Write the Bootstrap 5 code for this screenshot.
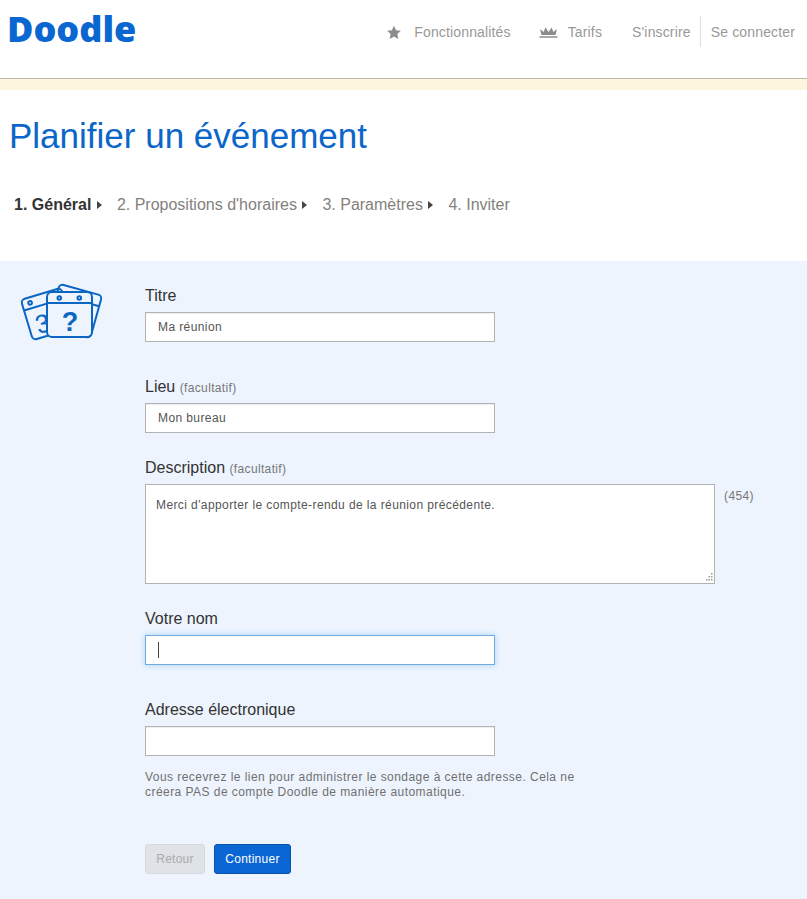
<!DOCTYPE html>
<html lang="fr">
<head>
  <meta charset="UTF-8">
  <title>Doodle - Planifier un événement</title>
  <meta name="viewport" content="width=device-width, initial-scale=1">
  <link rel="stylesheet" href="https://cdn.jsdelivr.net/npm/bootstrap@5.3.0/dist/css/bootstrap.min.css">
  <style>
    html, body { font-family: "Liberation Sans", Arial, sans-serif; background: #fff; color: #333; }
    /* header */
    .top-bar { height: 79px; border-bottom: 1px solid #b9b9a9; padding: 15px 12px 0 7px; }
    .logo { font-family: "Open Sans", sans-serif; font-weight: 800; font-size: 36px; line-height: 28px; color: #0a66d0; text-decoration: none; }
    .top-nav { margin-top: 1px; }
    .top-link { color: #999; font-size: 14px; line-height: 33px; letter-spacing: .15px; text-decoration: none; }
    .top-link svg { fill: #8c8c8c; display: block; }
    .link-gap { margin-right: 30px; }
    .link-gap-short { margin-right: 28px; }
    .crown-icon { margin-right: 2px; }
    .divider { border-left: 1px solid #ddd; height: 31px; margin: 0 10px 0 9px; }
    .notice-strip { height: 11px; background: #fdf5de; }
    /* title + steps */
    .page-title { font-size: 35px; line-height: 40px; color: #0a66c8; font-weight: 400; margin: 26px 0 0 9px; }
    .steps { margin: 39px 0 0 14px; height: 66px; font-size: 16px; line-height: 20px; color: #84817c; }
    .steps b { color: #333; }
    .step-arrow { width: 0; height: 0; border-left: 5px solid #444; border-top: 4.500px solid transparent; border-bottom: 4.500px solid transparent; margin: 6px 15px 0 5.500px; }
    /* form panel */
    .panel-area { background: #edf4fe; padding: 24px 0 25px 20px; }
    .icon-col { width: 125px; flex: none; margin-top: -2px; }
    .field-label { font-size: 16px; line-height: 22px; color: #333; margin: 0 0 5px; display: block; }
    .field-label small { font-size: 12px; line-height: 1; letter-spacing: .35px; color: #777; }
    .field-input.form-control { width: 350px; height: 30px; border: 1px solid #b2b2b2; border-radius: 0; padding: 0 12px; font-size: 12px; letter-spacing: .4px; color: #555; background: #fff; box-shadow: inset 0 1px 1px #eee; }
    .field-input.is-active { border-color: #72acdf; box-shadow: 0 0 6px #a5cff3; }
    .caret-mark { position: absolute; left: 13px; top: 7px; width: 1px; height: 16px; background: #444; }
    .text-box.form-control { width: 570px; height: 100px; border: 1px solid #b2b2b2; border-radius: 0; padding: 12px 10px; font-size: 12px; letter-spacing: .4px; line-height: 16px; color: #555; resize: none; }
    .grip { position: absolute; right: 2px; bottom: 2px; fill: #999; }
    .counter { font-size: 12px; letter-spacing: .4px; color: #777; margin: 3px 0 0 9px; }
    .gap-wide { margin-bottom: 34px; }
    .gap-narrow { margin-bottom: 24px; }
    .help-text { font-size: 12px; letter-spacing: .45px; line-height: 15px; color: #707070; margin: 14px 0 44px; width: 450px; }
    .btn-back.btn, .btn-next.btn { height: 30px; padding: 0; font-size: 12px; letter-spacing: .25px; border-radius: 3px; line-height: 28px; }
    .btn-back.btn { width: 60px; background: #dfe2e6; border: 1px solid #d6d9dd; color: #aaa; opacity: 1; }
    .btn-next.btn { width: 77px; background: #0a66d4; border: 1px solid #0a50a8; color: #fff; margin-left: 9px; }
  </style>
</head>
<body>
  <header class="top-bar d-flex justify-content-between align-items-start">
    <a class="logo" href="#">Doodle</a>
    <nav class="top-nav d-flex align-items-start">
      <a class="top-link d-flex align-items-center gap-2 link-gap-short" href="#">
        <svg width="16" height="15" viewBox="0 0 24 24"><path d="M12 1l3.400 7.200 7.600 1-5.600 5.300 1.500 7.800L12 18.400l-6.900 3.900 1.500-7.800L1 9.200l7.600-1z"/></svg>
        <span class="ms-1">Fonctionnalités</span>
      </a>
      <a class="top-link d-flex align-items-center gap-2 link-gap" href="#">
        <svg class="crown-icon" width="19" height="11" viewBox="0 0 19 11"><path d="M1 2l3.500 3L6.500 .5 9.500 5l3-4.500 2 4.500L18 2l-1.500 6h-14zM.5 9.300h18v1.400H.5z"/></svg>
        <span>Tarifs</span>
      </a>
      <a class="top-link" href="#">S'inscrire</a>
      <span class="divider"></span>
      <a class="top-link" href="#">Se connecter</a>
    </nav>
  </header>
  <div class="notice-strip"></div>

  <h1 class="page-title">Planifier un événement</h1>
  <div class="steps d-flex align-items-start">
    <b>1. Général</b><span class="step-arrow"></span>
    <span>2. Propositions d'horaires</span><span class="step-arrow"></span>
    <span>3. Paramètres</span><span class="step-arrow"></span>
    <span>4. Inviter</span>
  </div>

  <main class="panel-area d-flex">
    <div class="icon-col">
      <svg width="84" height="60" viewBox="0 0 84 60" fill="none" stroke="#0a66c2" stroke-width="2">
        <g transform="rotate(-16.700 27 31)">
          <rect x="6" y="10" width="42" height="42" rx="4"/>
          <path d="M6 21h42"/>
          <circle cx="14" cy="15.500" r="1.800"/>
          <text x="13" y="48" font-family="Liberation Sans" font-size="26" fill="#0a66c2" stroke="none">3</text>
        </g>
        <g transform="rotate(15.600 55 28)">
          <rect x="33" y="6" width="44" height="44" rx="4"/>
          <path d="M33 17h44"/>
        </g>
        <rect x="27" y="9" width="45" height="45" rx="5" fill="#edf4fe"/>
        <path d="M27 20h45"/>
        <circle cx="39.300" cy="15" r="1.800"/>
        <circle cx="59.300" cy="15" r="1.800"/>
        <text x="50" y="48" text-anchor="middle" font-family="Liberation Sans" font-weight="700" font-size="27" fill="#0a66c2" stroke="none">?</text>
      </svg>
    </div>
    <form class="flex-grow-1">
      <div class="gap-wide">
        <label class="field-label">Titre</label>
        <input class="field-input form-control" type="text" value="Ma réunion">
      </div>
      <div class="gap-narrow">
        <label class="field-label">Lieu <small>(facultatif)</small></label>
        <input class="field-input form-control" type="text" value="Mon bureau">
      </div>
      <div class="gap-narrow">
        <label class="field-label">Description <small>(facultatif)</small></label>
        <div class="d-flex align-items-start">
          <div class="position-relative">
            <textarea class="text-box form-control">Merci d'apporter le compte-rendu de la réunion précédente.</textarea>
            <svg class="grip" width="9" height="9" viewBox="0 0 9 9"><path d="M7 0h1.500v1.500H7zM4.500 3H6v1.500H4.500zM7 3h1.500v1.500H7zM2 6h1.500v1.500H2zM4.500 6H6v1.500H4.500zM7 6h1.500v1.500H7z"/></svg>
          </div>
          <span class="counter">(454)</span>
        </div>
      </div>
      <div class="gap-wide">
        <label class="field-label">Votre nom</label>
        <div class="position-relative">
          <input class="field-input form-control is-active" type="text">
          <span class="caret-mark"></span>
        </div>
      </div>
      <div>
        <label class="field-label">Adresse électronique</label>
        <input class="field-input form-control" type="text">
        <p class="help-text">Vous recevrez le lien pour administrer le sondage à cette adresse. Cela ne créera PAS de compte Doodle de manière automatique.</p>
      </div>
      <div class="d-flex">
        <button class="btn btn-back" type="button" disabled>Retour</button>
        <button class="btn btn-next" type="button">Continuer</button>
      </div>
    </form>
  </main>
  <script src="https://cdn.jsdelivr.net/npm/bootstrap@5.3.0/dist/js/bootstrap.bundle.min.js"></script>
</body>
</html>
